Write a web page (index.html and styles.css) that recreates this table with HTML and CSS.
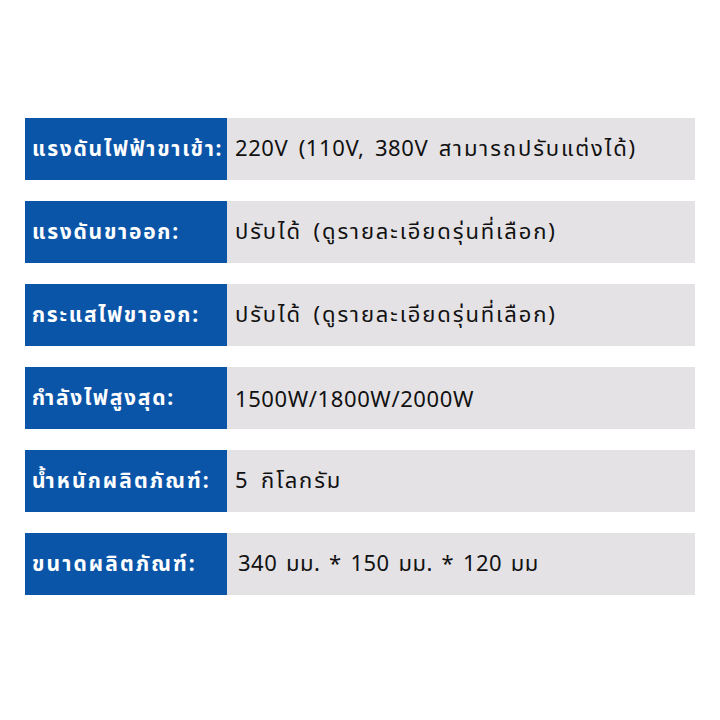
FILE: index.html
```html
<!DOCTYPE html>
<html lang="th">
<head>
<meta charset="utf-8">
<title>Specs</title>
<link rel="stylesheet" href="styles.css">
</head>
<body>
<div class="table">
  <div class="row"><div class="label">แรงดันไฟฟ้าขาเข้า:</div><div class="value"><span>220V (110V, 380V <span class="th">สามารถปรับแต่งได้</span>)</span></div></div>
  <div class="row"><div class="label">แรงดันขาออก:</div><div class="value"><span><span class="th">ปรับได้ (ดูรายละเอียดรุ่นที่เลือก</span>)</span></div></div>
  <div class="row"><div class="label">กระแสไฟขาออก:</div><div class="value"><span><span class="th">ปรับได้ (ดูรายละเอียดรุ่นที่เลือก</span>)</span></div></div>
  <div class="row"><div class="label">กำลังไฟสูงสุด:</div><div class="value"><span>1500W/1800W/2000W</span></div></div>
  <div class="row"><div class="label long">น้ำหนักผลิตภัณฑ์:</div><div class="value"><span class="th">5 กิโลกรัม</span></div></div>
  <div class="row"><div class="label long">ขนาดผลิตภัณฑ์:</div><div class="value wide"><span>340 มม. * 150 มม. * 120 มม</span></div></div>
</div>
</body>
</html>
```
FILE: styles.css
```css
html, body {
  margin: 0;
  padding: 0;
  background: #ffffff;
}
body {
  width: 720px;
  height: 720px;
  font-family: "Noto Sans", "Noto Sans Thai", "Noto Sans Thai Looped", "Loma", "Garuda", sans-serif;
}
.table {
  padding: 118px 0 0 25px;
  display: flex;
  flex-direction: column;
  gap: 21px;
}
.row {
  display: grid;
  grid-template-columns: 202px 468px;
  height: 62px;
}
.label {
  background: #0b55a9;
  color: #ffffff;
  font-weight: 700;
  font-size: 21px;
  letter-spacing: 1.75px;
  display: flex;
  align-items: center;
  padding-left: 7px;
  white-space: nowrap;
}
.label.long {
  letter-spacing: 2.1px;
}
.value {
  background: #e4e2e5;
  color: #111111;
  font-size: 22px;
  letter-spacing: 0.6px;
  word-spacing: 4px;
  display: flex;
  align-items: center;
  padding-left: 8px;
  white-space: nowrap;
}
.th {
  letter-spacing: 1.9px;
}
.value.wide {
  padding-left: 11px;
  letter-spacing: 0.5px;
  word-spacing: 2.5px;
}
```
